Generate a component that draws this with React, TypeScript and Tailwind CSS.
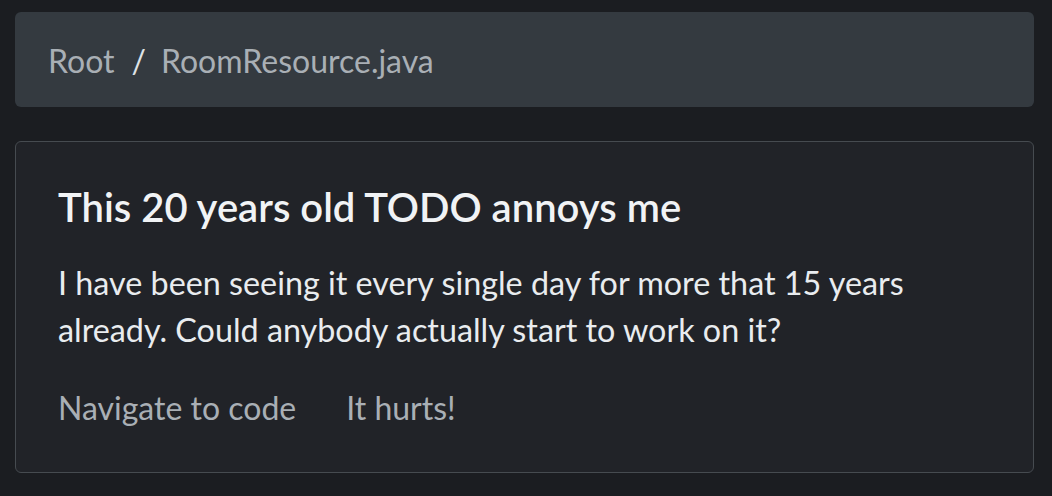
import React from 'react';

const FONT = { fontFamily: 'Lato, "Noto Sans", sans-serif' };

const Breadcrumb: React.FC<{ items: string[] }> = ({ items }) => (
  <nav className="rounded-md bg-[#343a40] px-[33px] pt-[26px] pb-[24px]">
    <ol className="flex items-center text-[32px] leading-[45px] text-[#a9afb5]">
      {items.map((item, i) => (
        <li key={item} className="flex items-center">
          {i > 0 && <span className="pl-[17px] pr-[15px] text-[#dee2e6]">/</span>}
          <span>{item}</span>
        </li>
      ))}
    </ol>
  </nav>
);

function App() {
  return (
    <div className="min-h-screen bg-[#1b1d21] pl-[15px] pr-[18px] pt-[12px] pb-[25px]" style={FONT}>
      <Breadcrumb items={['Root', 'RoomResource.java']} />

      <div className="mt-[34px] rounded-md border border-[#464b50] bg-[#212328] px-[42px] pt-[41px] pb-[41px]">
        <h5 className="text-[40px] font-semibold leading-[48px] text-[#f1f3f5]">
          This 20 years old TODO annoys me
        </h5>
        <p className="mt-[28px] text-[32.3px] leading-[47px] text-[#e9ecef]">
          I have been seeing it every single day for more that 15 years already. Could anybody actually start to work on it?
        </p>
        <div className="mt-[31px] flex gap-[50px] text-[32px] leading-[47px] text-[#a9afb5]">
          <a href="#">Navigate to code</a>
          <a href="#">It hurts!</a>
        </div>
      </div>
    </div>
  );
}

export default App;
